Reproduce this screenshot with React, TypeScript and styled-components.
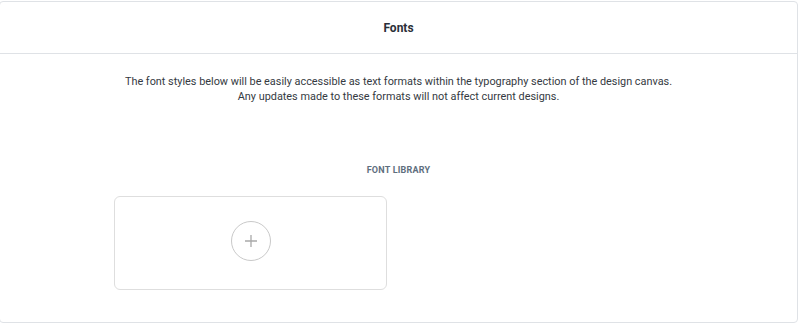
import React from 'react';
import styled, { createGlobalStyle } from 'styled-components';

const GlobalStyle = createGlobalStyle`
  html, body {
    margin: 0;
    padding: 0;
    background: #ffffff;
    overflow: hidden;
  }
  body {
    font-family: Roboto, "Liberation Sans", sans-serif;
  }
`;

const Page = styled.div`
  padding-top: 1px;
  margin-left: -1px;
  width: 799px;
  box-sizing: border-box;
`;

const Panel = styled.section`
  height: 322px;
  box-sizing: border-box;
  border: 1px solid #dfe2e6;
  border-radius: 4px;
  display: flex;
  flex-direction: column;
`;

const Header = styled.header`
  height: 51px;
  border-bottom: 1px solid #dfe2e6;
  display: flex;
  align-items: center;
  justify-content: center;
`;

const Title = styled.h2`
  margin: 0;
  font-size: 12px;
  font-weight: 700;
  color: #2a2f38;
`;

const Description = styled.p`
  margin: 20px 0 0;
  text-align: center;
  font-size: 10.88px;
  line-height: 15px;
  color: #353a42;
`;

const SectionLabel = styled.h3`
  margin: 61px 0 0;
  text-align: center;
  font-size: 9px;
  font-weight: 700;
  letter-spacing: 0.2px;
  color: #5e6e7e;
`;

const Library = styled.div`
  display: flex;
  gap: 16px;
  padding: 21px 0 0 114px;
`;

const AddCard = styled.button`
  width: 273px;
  height: 94px;
  box-sizing: border-box;
  border: 1px solid #dedede;
  border-radius: 6px;
  background: #ffffff;
  display: flex;
  align-items: center;
  justify-content: center;
  cursor: pointer;
  padding: 0 0 4px;
`;

const AddCircle = styled.span`
  width: 40px;
  height: 40px;
  box-sizing: border-box;
  border: 1px solid #c9c9c9;
  border-radius: 50%;
  display: flex;
  align-items: center;
  justify-content: center;
`;

const PlusIcon = () => (
  <svg width="14" height="14" viewBox="0 0 14 14">
    <path d="M7 1v12M1 7h12" stroke="#a9a9a9" strokeWidth="1.3" fill="none" />
  </svg>
);

export default function App() {
  return (
    <Page>
      <GlobalStyle />
      <Panel>
        <Header>
          <Title>Fonts</Title>
        </Header>
        <Description>
          The font styles below will be easily accessible as text formats within the typography section of the design canvas.
          <br />
          Any updates made to these formats will not affect current designs.
        </Description>
        <SectionLabel>FONT LIBRARY</SectionLabel>
        <Library>
          <AddCard aria-label="Add font">
            <AddCircle>
              <PlusIcon />
            </AddCircle>
          </AddCard>
        </Library>
      </Panel>
    </Page>
  );
}
